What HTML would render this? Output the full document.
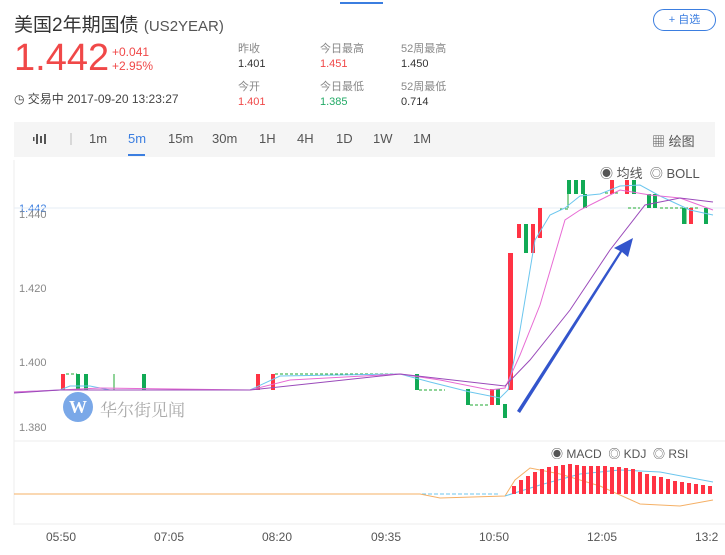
<!DOCTYPE html>
<html><head><meta charset="utf-8"><style>
body{margin:0;width:725px;height:555px;background:#fff;font-family:"Liberation Sans","Noto Sans CJK SC",sans-serif;position:relative;overflow:hidden}
.a{position:absolute;white-space:nowrap}
</style></head><body>
<div class="a" style="left:340px;top:2px;width:43px;height:2px;background:#3b7ee0"></div>
<div class="a" style="left:14px;top:10px;font-size:19px;color:#333">美国2年期国债 <span style="font-size:15px;color:#555">(US2YEAR)</span></div>
<div class="a" style="left:653px;top:9px;width:61px;height:20px;border:1px solid #3b7ee0;border-radius:11px;color:#3b7ee0;font-size:11px;line-height:20px;text-align:center">+ 自选</div>
<div class="a" style="left:14px;top:38px;font-size:38px;color:#f04848;line-height:40px">1.442</div>
<div class="a" style="left:112px;top:45px;font-size:12px;color:#f04848;line-height:14px">+0.041<br>+2.95%</div>
<div class="a" style="left:14px;top:90px;font-size:12px;color:#444">◷ 交易中 2017-09-20 13:23:27</div>
<div class="a" style="left:238px;top:42px;font-size:11px;line-height:15px;color:#888">昨收<br><span style="color:#333">1.401</span></div>
<div class="a" style="left:320px;top:42px;font-size:11px;line-height:15px;color:#888">今日最高<br><span style="color:#f04848">1.451</span></div>
<div class="a" style="left:401px;top:42px;font-size:11px;line-height:15px;color:#888">52周最高<br><span style="color:#333">1.450</span></div>
<div class="a" style="left:238px;top:80px;font-size:11px;line-height:15px;color:#888">今开<br><span style="color:#f04848">1.401</span></div>
<div class="a" style="left:320px;top:80px;font-size:11px;line-height:15px;color:#888">今日最低<br><span style="color:#22aa66">1.385</span></div>
<div class="a" style="left:401px;top:80px;font-size:11px;line-height:15px;color:#888">52周最低<br><span style="color:#333">0.714</span></div>
<div class="a" style="left:14px;top:122px;width:701px;height:35px;background:#f5f5f5"></div>
<svg class="a" style="left:30px;top:131px" width="50" height="16"><g fill="#555"><rect x="3" y="6" width="1.5" height="4"/><rect x="6" y="3" width="2" height="10"/><rect x="10" y="5" width="2" height="7"/><rect x="14" y="3" width="2" height="10"/><line x1="41" y1="2" x2="41" y2="14" stroke="#bbb"/></g></svg>
<div class="a" style="left:32px;top:131px;font-size:13px;color:#555">
<span style="position:absolute;left:57px">1m</span>
<span style="position:absolute;left:96px;color:#3b7ee0">5m</span>
<span style="position:absolute;left:136px">15m</span>
<span style="position:absolute;left:180px">30m</span>
<span style="position:absolute;left:227px">1H</span>
<span style="position:absolute;left:265px">4H</span>
<span style="position:absolute;left:304px">1D</span>
<span style="position:absolute;left:341px">1W</span>
<span style="position:absolute;left:381px">1M</span>
</div>
<div class="a" style="left:128px;top:154px;width:17px;height:2px;background:#3b7ee0"></div>
<div class="a" style="left:652px;top:131px;font-size:13px;color:#555">▦ 绘图</div>
<div class="a" style="left:600px;top:163px;font-size:13px;color:#555">◉ 均线 &nbsp;◎ BOLL</div>
<div class="a" style="left:551px;top:445px;font-size:12px;color:#555">◉ MACD &nbsp;◎ KDJ &nbsp;◎ RSI</div>
<div class="a" style="left:19px;top:203px;font-size:11px;color:#3b7ee0">1.442</div>
<div class="a" style="left:19px;top:209px;font-size:11px;color:#888">1.440</div>
<div class="a" style="left:19px;top:283px;font-size:11px;color:#888">1.420</div>
<div class="a" style="left:19px;top:357px;font-size:11px;color:#888">1.400</div>
<div class="a" style="left:19px;top:422px;font-size:11px;color:#888">1.380</div>
<div class="a" style="left:63px;top:392px;width:30px;height:30px;border-radius:50%;background:#7aa8e8;color:#fff;font:bold 18px 'Liberation Serif',serif;text-align:center;line-height:30px">W</div>
<div class="a" style="left:100px;top:396px;font-size:17px;color:#aaa;font-family:'Noto Serif CJK SC',serif">华尔街见闻</div>
<div class="a" style="top:530px;font-size:12px;color:#555;left:46px">05:50</div>
<div class="a" style="top:530px;font-size:12px;color:#555;left:154px">07:05</div>
<div class="a" style="top:530px;font-size:12px;color:#555;left:262px">08:20</div>
<div class="a" style="top:530px;font-size:12px;color:#555;left:371px">09:35</div>
<div class="a" style="top:530px;font-size:12px;color:#555;left:479px">10:50</div>
<div class="a" style="top:530px;font-size:12px;color:#555;left:587px">12:05</div>
<div class="a" style="top:530px;font-size:12px;color:#555;left:695px">13:2</div>
<svg class="a" style="left:0;top:0" width="725" height="555">
<line x1="14" y1="160" x2="14" y2="525" stroke="#eee"/>
<line x1="14" y1="208" x2="725" y2="208" stroke="#e6ecf5"/>
<line x1="14" y1="441" x2="725" y2="441" stroke="#eee"/>
<line x1="14" y1="524" x2="725" y2="524" stroke="#eee"/>
<g stroke="#2a3" stroke-dasharray="3,2" fill="none"><path d="M66 374H77M87 390H130M146 390H200M275 374H400M419 390H445M470 405H490M560 209H570M605 193H620M628 208H640M660 208H700"/></g>
<g stroke="#2a3"><path d="M114 374V390M568 208V190M686 208V224"/></g>
<g fill="#f34"><rect x="61" y="374" width="4" height="16"/><rect x="256" y="374" width="4" height="16"/><rect x="271" y="374" width="4" height="16"/><rect x="490" y="389" width="4" height="16"/><rect x="508" y="253" width="5" height="137"/><rect x="517" y="224" width="4" height="14"/><rect x="531" y="224" width="4" height="29"/><rect x="538" y="208" width="4" height="30"/><rect x="610" y="180" width="4" height="14"/><rect x="625" y="180" width="4" height="14"/><rect x="689" y="208" width="4" height="16"/></g>
<g fill="#1a5"><rect x="76" y="374" width="4" height="16"/><rect x="84" y="374" width="4" height="16"/><rect x="142" y="374" width="4" height="16"/><rect x="415" y="374" width="4" height="16"/><rect x="466" y="389" width="4" height="16"/><rect x="496" y="389" width="4" height="16"/><rect x="503" y="404" width="4" height="14"/><rect x="524" y="224" width="4" height="29"/><rect x="567" y="180" width="4" height="14"/><rect x="574" y="180" width="4" height="14"/><rect x="581" y="180" width="4" height="14"/><rect x="583" y="194" width="4" height="14"/><rect x="632" y="180" width="4" height="14"/><rect x="647" y="194" width="4" height="14"/><rect x="653" y="194" width="4" height="14"/><rect x="682" y="208" width="4" height="16"/><rect x="704" y="208" width="4" height="16"/></g>
<path d="M14 392 L60 390 L70 386 L90 386 L110 390 L250 390 L280 376 L400 374 L430 382 L470 392 L500 398 L508 390 L520 330 L535 240 L550 215 L565 208 L580 196 L600 194 L620 186 L640 185 L660 196 L690 210 L713 215" stroke="#6cc6ee" fill="none"/>
<path d="M14 392 L60 390 L100 388 L250 390 L290 380 L400 374 L440 380 L490 390 L505 388 L520 355 L540 305 L565 220 L580 210 L600 200 L620 190 L650 195 L680 198 L713 210" stroke="#e86cd4" fill="none"/>
<path d="M14 393 L60 390 L250 390 L400 374 L470 382 L505 386 L530 360 L570 310 L610 250 L645 205 L680 198 L713 202" stroke="#9a4aba" fill="none"/>
<path d="M520 413 L622 252 L628 257 L633 238 L614 248 L620 251 L517 411Z" fill="#3355cc"/>
<path d="M14 494 L500 494" stroke="#6cc6ee" stroke-dasharray="4,2"/>
<path d="M14 494 L420 494 L440 498 L505 496 L515 480 L530 468 L560 474 L600 486 L640 504 L680 506 L713 500" stroke="#f5b066" fill="none"/>
<path d="M505 496 L540 485 L580 474 L620 470 L660 472 L713 482" stroke="#6cc6ee" fill="none"/>
<g fill="#f34">
<rect x="512" y="486" width="4" height="8"/><rect x="519" y="480" width="4" height="14"/><rect x="526" y="476" width="4" height="18"/><rect x="533" y="472" width="4" height="22"/><rect x="540" y="469" width="4" height="25"/><rect x="547" y="467" width="4" height="27"/><rect x="554" y="466" width="4" height="28"/><rect x="561" y="465" width="4" height="29"/><rect x="568" y="464" width="4" height="30"/><rect x="575" y="465" width="4" height="29"/><rect x="582" y="466" width="4" height="28"/><rect x="589" y="466" width="4" height="28"/><rect x="596" y="466" width="4" height="28"/><rect x="603" y="466" width="4" height="28"/><rect x="610" y="467" width="4" height="27"/><rect x="617" y="467" width="4" height="27"/><rect x="624" y="468" width="4" height="26"/><rect x="631" y="469" width="4" height="25"/><rect x="638" y="472" width="4" height="22"/><rect x="645" y="474" width="4" height="20"/><rect x="652" y="476" width="4" height="18"/><rect x="659" y="477" width="4" height="17"/><rect x="666" y="479" width="4" height="15"/><rect x="673" y="481" width="4" height="13"/><rect x="680" y="482" width="4" height="12"/><rect x="687" y="483" width="4" height="11"/><rect x="694" y="484" width="4" height="10"/><rect x="701" y="485" width="4" height="9"/><rect x="708" y="486" width="4" height="8"/></g>
</svg>
</body></html>
